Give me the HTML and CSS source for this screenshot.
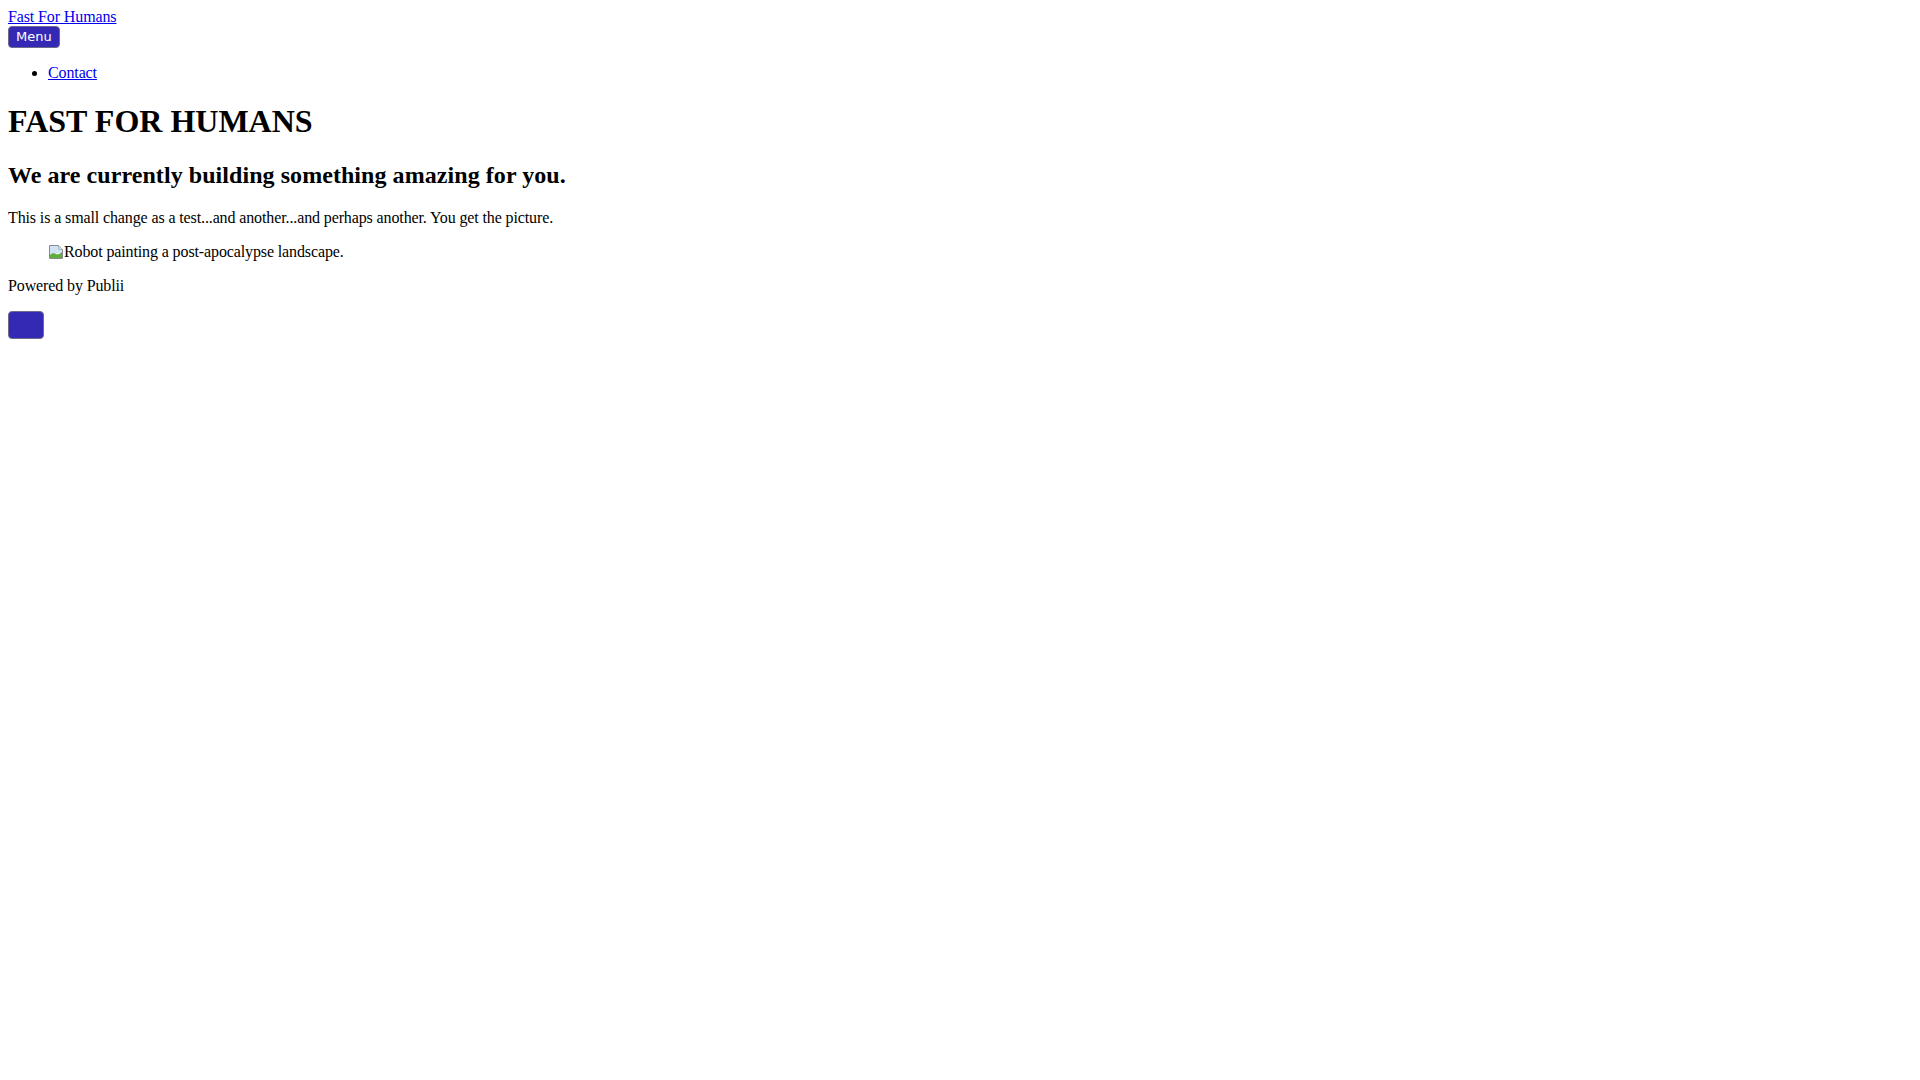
FILE: index.html
```html
<!DOCTYPE html>
<html lang="en">
<head>
<meta charset="utf-8">
<title>Fast For Humans</title>
<link rel="stylesheet" href="styles.css">
</head>
<body>
<header class="site-header">
  <a class="logo" href="#">Fast For Humans</a>
  <nav class="nav">
    <button class="nav-toggle" type="button">Menu</button>
    <ul class="nav-list">
      <li><a href="#">Contact</a></li>
    </ul>
  </nav>
</header>
<main class="content">
  <h1 class="title">FAST FOR HUMANS</h1>
  <h2 class="subtitle">We are currently building something amazing for you.</h2>
  <p class="lead">This is a small change as a test...and another...and perhaps another. You get the picture.</p>
  <figure class="figure"><svg class="broken-icon" width="16" height="16" viewBox="0 0 16 16" aria-hidden="true"><path d="M1.5 1.5h9l4 4v9h-13z" fill="#f4f4f4" stroke="#8a8a8a"/><path d="M10.5 1.5v4h4" fill="#dcdcdc" stroke="#8a8a8a"/><path d="M2 2h8.5v3.5H14V8L2 11z" fill="#cfe3f5"/><path d="M2 14V11c2-2 4-2.5 6-1 1.5 1 3.5 0 6-2V14z" fill="#5fae3e"/></svg><span class="alt-text">Robot painting a post-apocalypse landscape.</span></figure>
</main>
<footer class="site-footer">
  <p class="powered">Powered by Publii</p>
  <button class="back-to-top" type="button" aria-label="Back to top"></button>
</footer>
</body>
</html>
```
FILE: styles.css
```css
body {
  margin: 8px;
  font-family: "Liberation Serif", "Times New Roman", serif;
  font-size: 16px;
  letter-spacing: -0.12px;
  color: #000;
  background: #fff;
}
a { color: #0000ee; }
.nav { display: block; }
.nav-toggle {
  display: block;
  font-family: "DejaVu Sans", sans-serif;
  font-size: 13px;
  line-height: 16px;
  letter-spacing: 0;
  color: #fff;
  background: #3429b5;
  border: 1px solid #6d6a8c;
  border-radius: 4px;
  padding: 2px 7px;
  height: 22px;
  margin: 0;
}
.nav-list {
  margin: 16px 0;
  padding-left: 40px;
}
.title {
  font-size: 32px;
  letter-spacing: 0;
  margin: 21.44px 0;
}
.subtitle {
  font-size: 24px;
  letter-spacing: 0.06px;
  margin: 19.92px 0;
}
.lead { margin: 16px 0; }
.figure { margin: 16px 40px; }
.broken-icon { vertical-align: text-bottom; }
.powered { margin: 16px 0; }
.back-to-top {
  display: block;
  width: 36px;
  height: 28px;
  background: #3429b5;
  border: 1px solid #6d6a8c;
  border-radius: 4px;
  padding: 0;
  margin: 0;
}
```
